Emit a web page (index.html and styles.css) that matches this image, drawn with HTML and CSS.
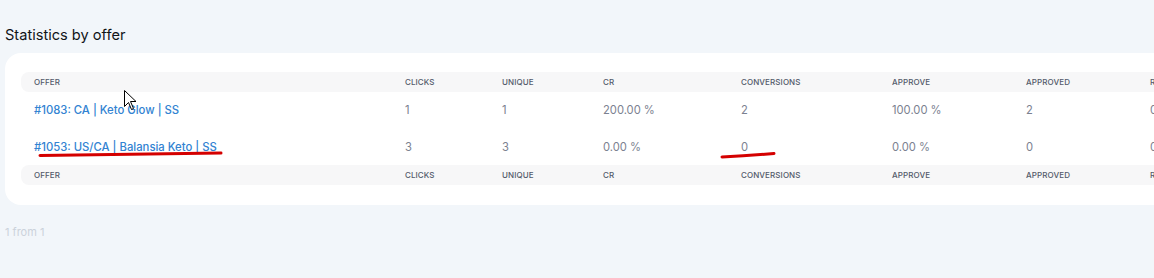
FILE: index.html
```html
<!DOCTYPE html>
<html>
<head>
<meta charset="utf-8">
<link rel="stylesheet" href="styles.css">
</head>
<body>
<div class="page">
  <h2 class="title">Statistics by offer</h2>
  <div class="card">
    <table class="stats">
      <colgroup>
        <col class="c-offer"><col class="c-clicks"><col class="c-unique"><col class="c-cr"><col class="c-conv"><col class="c-approve"><col class="c-approved"><col class="c-r">
      </colgroup>
      <thead>
        <tr class="head">
          <th>Offer</th><th>Clicks</th><th>Unique</th><th>CR</th><th>Conversions</th><th>Approve</th><th>Approved</th><th>Rejected</th>
        </tr>
      </thead>
      <tbody>
        <tr class="row r1">
          <td><a class="offer">#1083: CA | Keto Glow | SS</a></td><td>1</td><td>1</td><td>200.00 %</td><td>2</td><td>100.00 %</td><td>2</td><td>0</td>
        </tr>
        <tr class="row r2">
          <td><a class="offer">#1053: US/CA | Balansia Keto | SS</a></td><td>3</td><td>3</td><td>0.00 %</td><td>0</td><td>0.00 %</td><td>0</td><td>0</td>
        </tr>
      </tbody>
      <tfoot>
        <tr class="head">
          <th>Offer</th><th>Clicks</th><th>Unique</th><th>CR</th><th>Conversions</th><th>Approve</th><th>Approved</th><th>Rejected</th>
        </tr>
      </tfoot>
    </table>
  </div>
  <div class="pager">1 from 1</div>
</div>
<svg class="marks" width="1154" height="278" viewBox="0 0 1154 278">
  <path d="M40 155.5 Q130 154.5 221 153" stroke="#d40000" stroke-width="3" fill="none" stroke-linecap="round"/>
  <path d="M722 157 Q748 155.5 774 153.5" stroke="#d40000" stroke-width="3" fill="none" stroke-linecap="round"/>
  <path d="M124.5 90.5 L124.5 106.5 L128.5 102.5 L131.5 109.5 L133.5 108.5 L130.5 101.5 L136 101.5 Z" fill="#fff" stroke="#000" stroke-width="1" stroke-linejoin="miter"/>
</svg>
</body>
</html>
```

FILE: styles.css
```css
html, body {
  margin: 0;
  padding: 0;
  overflow: hidden;
}
body {
  background: #f2f6fa;
  font-family: Inter, "Noto Sans", sans-serif;
  width: 1154px;
  height: 278px;
  position: relative;
}
.page {
  padding: 26px 0 0 5px;
}
.title {
  margin: 0;
  font-size: 14.6px;
  line-height: 18px;
  font-weight: 400;
  color: #111418;
}
.card {
  margin-top: 9px;
  width: 1220px;
  background: #fff;
  border-radius: 16px;
  padding: 19px 0 20px 16px;
  box-sizing: border-box;
}
.stats {
  border-collapse: separate;
  border-spacing: 0;
  table-layout: fixed;
  width: 1200px;
}
.c-offer { width: 371px; }
.c-clicks { width: 97px; }
.c-unique { width: 101px; }
.c-cr { width: 138px; }
.c-conv { width: 151px; }
.c-approve { width: 134px; }
.c-approved { width: 124px; }
.c-r { width: 84px; }
.head th {
  background: #f7f7f8;
  height: 20px;
  padding: 0 0 0 13px;
  text-align: left;
  font-size: 8px;
  font-weight: 500;
  text-transform: uppercase;
  letter-spacing: 0.1px;
  color: #535a6a;
  white-space: nowrap;
  overflow: hidden;
}
.head th:first-child {
  border-radius: 8px 0 0 8px;
}
.row td {
  padding: 0 0 0 13px;
  font-size: 11.2px;
  color: #7b8190;
  white-space: nowrap;
  overflow: hidden;
}
.r1 td { height: 36px; }
.r2 td { height: 37px; }
.offer {
  color: #3283d2;
  font-weight: 500;
  font-size: 11.3px;
  text-decoration: none;
}
.pager {
  margin-top: 20px;
  font-size: 11px;
  line-height: 14px;
  color: #cbd2db;
}
.marks {
  position: absolute;
  left: 0;
  top: 0;
  pointer-events: none;
}
```
